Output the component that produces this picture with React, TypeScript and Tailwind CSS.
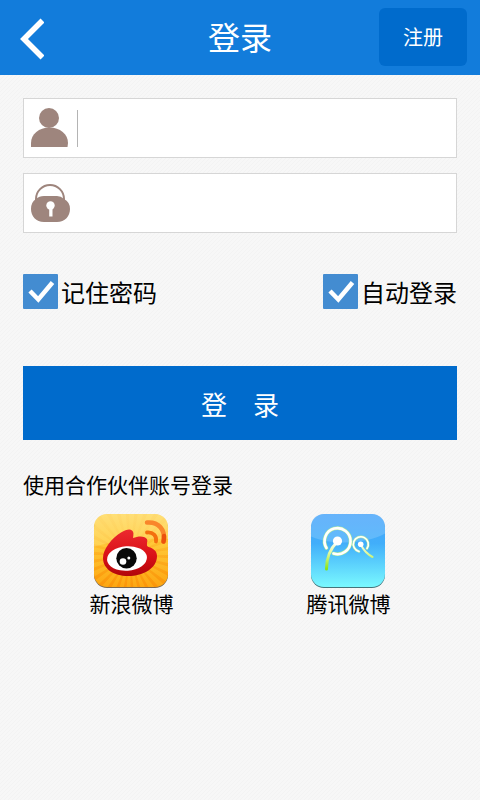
import React, { useState } from 'react';

interface TextFieldProps {
  label: string;
  type: string;
  value: string;
  onChange: (value: string) => void;
  icon: React.ReactNode;
  divider?: boolean;
}

interface CheckFieldProps {
  label: string;
  checked: boolean;
  onChange: (checked: boolean) => void;
}

interface PartnerProps {
  name: string;
  icon: React.ReactNode;
}

const UserIcon = () => (
  <svg viewBox="0 0 40 40" className="h-10 w-10 shrink-0" fill="#9e857d" aria-hidden="true">
    <circle cx="19" cy="10" r="10" />
    <path d="M1 39v-4C1 26 9 19.500 19.500 19.500S38 26 38 35l-.5 4z" />
  </svg>
);

const LockIcon = () => (
  <svg viewBox="0 0 40 40" className="h-10 w-10 shrink-0" aria-hidden="true">
    <path d="M6 17v-1a14 14 0 0 1 28 0v1" fill="none" stroke="#9e857d" strokeWidth="2" />
    <path d="M6 16Q9 13 14 13h13q4 0 7 3 6 3 6 10c0 7-5 13-13 13H14C6 39 1 33 1 26Q1 19 6 16z" fill="#9e857d" />
    <circle cx="20.500" cy="22.500" r="4.200" fill="#fff" />
    <path d="M19.200 24h3.300v9.500h-3.300z" fill="#fff" />
  </svg>
);

const rays = Array.from({ length: 30 }, (_, i) => {
  const point = (deg: number) => {
    const a = (deg * Math.PI) / 180;
    return `${(37 + 60 * Math.cos(a)).toFixed(1)} ${(42 + 60 * Math.sin(a)).toFixed(1)}`;
  };
  return `M37 42L${point(i * 12)}L${point(i * 12 + 5)}z`;
}).join('');

const SinaIcon = () => (
  <svg viewBox="1 0 76 76" className="h-19 w-19" aria-hidden="true">
    <defs>
      <linearGradient id="sinaBg" x1="0" y1="0" x2="0" y2="1">
        <stop offset="0" stopColor="#ffd968" />
        <stop offset=".4" stopColor="#ffc838" />
        <stop offset="1" stopColor="#fda50f" />
      </linearGradient>
      <linearGradient id="sinaRed" x1="0" y1="0" x2="0" y2="1">
        <stop offset="0" stopColor="#ec2a2f" />
        <stop offset=".6" stopColor="#d80f16" />
        <stop offset="1" stopColor="#b0060b" />
      </linearGradient>
      <linearGradient id="sinaRays" gradientUnits="userSpaceOnUse" x1="0" y1="0" x2="0" y2="76">
        <stop offset=".2" stopColor="#f98d00" stopOpacity=".08" />
        <stop offset="1" stopColor="#f98300" stopOpacity=".5" />
      </linearGradient>
      <clipPath id="sinaClip">
        <rect x="1" y="1" width="74" height="73" rx="13" />
      </clipPath>
    </defs>
    <rect x="1" y="3" width="74" height="72" rx="13" fill="#7d6a50" />
    <g clipPath="url(#sinaClip)">
      <rect width="76" height="76" fill="url(#sinaBg)" />
      <path d={rays} fill="url(#sinaRays)" />
      <path d="M0 0h76v26C50 25 24 27 0 34z" fill="#fff3a8" opacity=".25" />
    </g>
    <path
      d="M10 45C10 36 19 25 28 19.500c5-3 9-4 11-2 2 1.500 1.500 4 1 7.500 4-1.500 8-2 11-1 3 1 4 3 3 6 0 2-.5 3 1.500 4 5 1.500 8.500 4 8.500 9C64 55 51 63 35 63 21 63 10 56 10 45z"
      fill="url(#sinaRed)"
    />
    <ellipse cx="34" cy="45.500" rx="20" ry="12.300" fill="#fff" transform="rotate(-4 34 45.500)" />
    <circle cx="33.500" cy="45.200" r="10.200" fill="#090909" />
    <circle cx="30" cy="48.500" r="3.300" fill="#fff" />
    <circle cx="35.800" cy="45" r="1.500" fill="#fff" />
    <path d="M54 19.500c6-.5 10 3 9 9" fill="none" stroke="#f4700f" strokeWidth="3.800" strokeLinecap="round" />
    <path d="M54 9.500c11-1 19 7 16.500 19" fill="none" stroke="#f9862a" strokeWidth="4.500" strokeLinecap="round" />
    <path d="M71 23q.3 3-.5 5.500" fill="none" stroke="#ec520c" strokeWidth="4.500" strokeLinecap="round" />
  </svg>
);

const TencentIcon = () => (
  <svg viewBox="1 0 76 76" className="h-19 w-19" aria-hidden="true">
    <defs>
      <linearGradient id="qqBg" x1="0" y1="0" x2="0" y2="1">
        <stop offset="0" stopColor="#48a4fa" />
        <stop offset=".4" stopColor="#41aefa" />
        <stop offset="1" stopColor="#7cfcff" />
      </linearGradient>
      <linearGradient id="qqStem" gradientUnits="userSpaceOnUse" x1="0" y1="28" x2="0" y2="57">
        <stop offset="0" stopColor="#fff" />
        <stop offset=".4" stopColor="#e2f9a0" />
        <stop offset="1" stopColor="#86e30c" />
      </linearGradient>
      <clipPath id="qqClip">
        <rect x="1" y="1" width="74" height="73" rx="13" />
      </clipPath>
    </defs>
    <rect x="1" y="3" width="74" height="72" rx="13" fill="#44747b" />
    <g clipPath="url(#qqClip)">
      <rect width="76" height="76" fill="url(#qqBg)" />
      <path d="M0 0h76v20C60 30 24 34 0 23z" fill="#fff" opacity=".17" />
    </g>
    <g fill="none" strokeLinecap="round">
      <path d="M16.500 35A13 13 0 1 1 23.500 40.500" stroke="#b4ec96" strokeWidth="3.600" />
      <path d="M16.500 35A13 13 0 1 1 23.500 40.500" stroke="#fff" strokeWidth="2.600" />
      <path d="M57 35.500A7.500 7.500 0 1 0 49 38.500" stroke="#b4ec96" strokeWidth="2.600" />
      <path d="M57 35.500A7.500 7.500 0 1 0 49 38.500" stroke="#fff" strokeWidth="1.600" />
      <path d="M27 29C20 36 16.500 44 16.500 56" stroke="url(#qqStem)" strokeWidth="3" />
      <path d="M51 32c3 6 6 9 11.500 12" stroke="url(#qqStem)" strokeWidth="2" />
    </g>
    <circle cx="27.500" cy="28" r="4.600" fill="#fff" />
    <circle cx="50.700" cy="31.300" r="2.800" fill="#fff" />
  </svg>
);

const TextField: React.FC<TextFieldProps> = ({ label, type, value, onChange, icon, divider }) => (
  <label className="flex h-15 items-center border border-[#d6d6d6] bg-white pl-1.5">
    {icon}
    {divider && <span className="ml-[7px] h-[37px] w-px bg-[#b4b4b4]" />}
    <input
      type={type}
      aria-label={label}
      value={value}
      onChange={(e) => onChange(e.target.value)}
      className="h-full min-w-0 flex-1 px-2 text-2xl text-black outline-none"
    />
  </label>
);

const CheckField: React.FC<CheckFieldProps> = ({ label, checked, onChange }) => (
  <label className="flex items-center gap-[3px] text-2xl">
    <span className="grid h-[35px] w-[35px]">
      <input
        type="checkbox"
        checked={checked}
        onChange={(e) => onChange(e.target.checked)}
        className="col-start-1 row-start-1 appearance-none rounded-[1px] bg-[#438cd1]"
      />
      {checked && (
        <svg viewBox="0 0 35 35" className="pointer-events-none col-start-1 row-start-1" aria-hidden="true">
          <path d="M7 17l8.300 8.500L29.500 8.500" fill="none" stroke="#fff" strokeWidth="4.500" />
        </svg>
      )}
    </span>
    {label}
  </label>
);

const Partner: React.FC<PartnerProps> = ({ name, icon }) => (
  <a href="#" className="flex flex-col items-center text-[21px] leading-7">
    {icon}
    {name}
  </a>
);

export default function App() {
  const [account, setAccount] = useState('');
  const [password, setPassword] = useState('');
  const [remember, setRemember] = useState(true);
  const [autoLogin, setAutoLogin] = useState(true);

  return (
    <div className="min-h-screen bg-[#f7f7f7] bg-[linear-gradient(135deg,#f3f3f3_12%,transparent_12%,transparent_38%,#f3f3f3_38%,#f3f3f3_62%,transparent_62%,transparent_88%,#f3f3f3_88%)] bg-size-[4px_4px] font-['Noto_Sans_CJK_SC',sans-serif] text-black">
      <header className="grid grid-cols-[88px_1fr_88px] items-center bg-[#127cdb] px-[13px] pt-2 pb-[9px] text-white">
        <button type="button" aria-label="返回" className="justify-self-start pt-1 pl-[7px]">
          <svg viewBox="0 0 24 42" className="h-[42px] w-6" aria-hidden="true">
            <path d="M22.500 2.500L4 21l18.500 18.500" fill="none" stroke="#fff" strokeWidth="5.600" />
          </svg>
        </button>
        <h1 className="pb-0.5 text-center text-[32px] leading-10">登录</h1>
        <button type="button" className="h-[58px] rounded-md bg-[#006bcc] text-xl">
          注册
        </button>
      </header>

      <main className="px-[23px] pt-[23px]">
        <form onSubmit={(e) => e.preventDefault()}>
          <div className="flex flex-col gap-[15px]">
            <TextField label="账号" type="text" value={account} onChange={setAccount} icon={<UserIcon />} divider />
            <TextField label="密码" type="password" value={password} onChange={setPassword} icon={<LockIcon />} />
          </div>
          <div className="mt-[41px] flex justify-between">
            <CheckField label="记住密码" checked={remember} onChange={setRemember} />
            <CheckField label="自动登录" checked={autoLogin} onChange={setAutoLogin} />
          </div>
          <button type="submit" className="mt-[57px] h-[74px] w-full bg-[#006bcc] text-[26px] text-white">
            登　录
          </button>
        </form>

        <section>
          <h2 className="mt-7 text-[21px] leading-8">使用合作伙伴账号登录</h2>
          <div className="mt-[13px] grid grid-cols-2">
            <Partner name="新浪微博" icon={<SinaIcon />} />
            <Partner name="腾讯微博" icon={<TencentIcon />} />
          </div>
        </section>
      </main>
    </div>
  );
}
